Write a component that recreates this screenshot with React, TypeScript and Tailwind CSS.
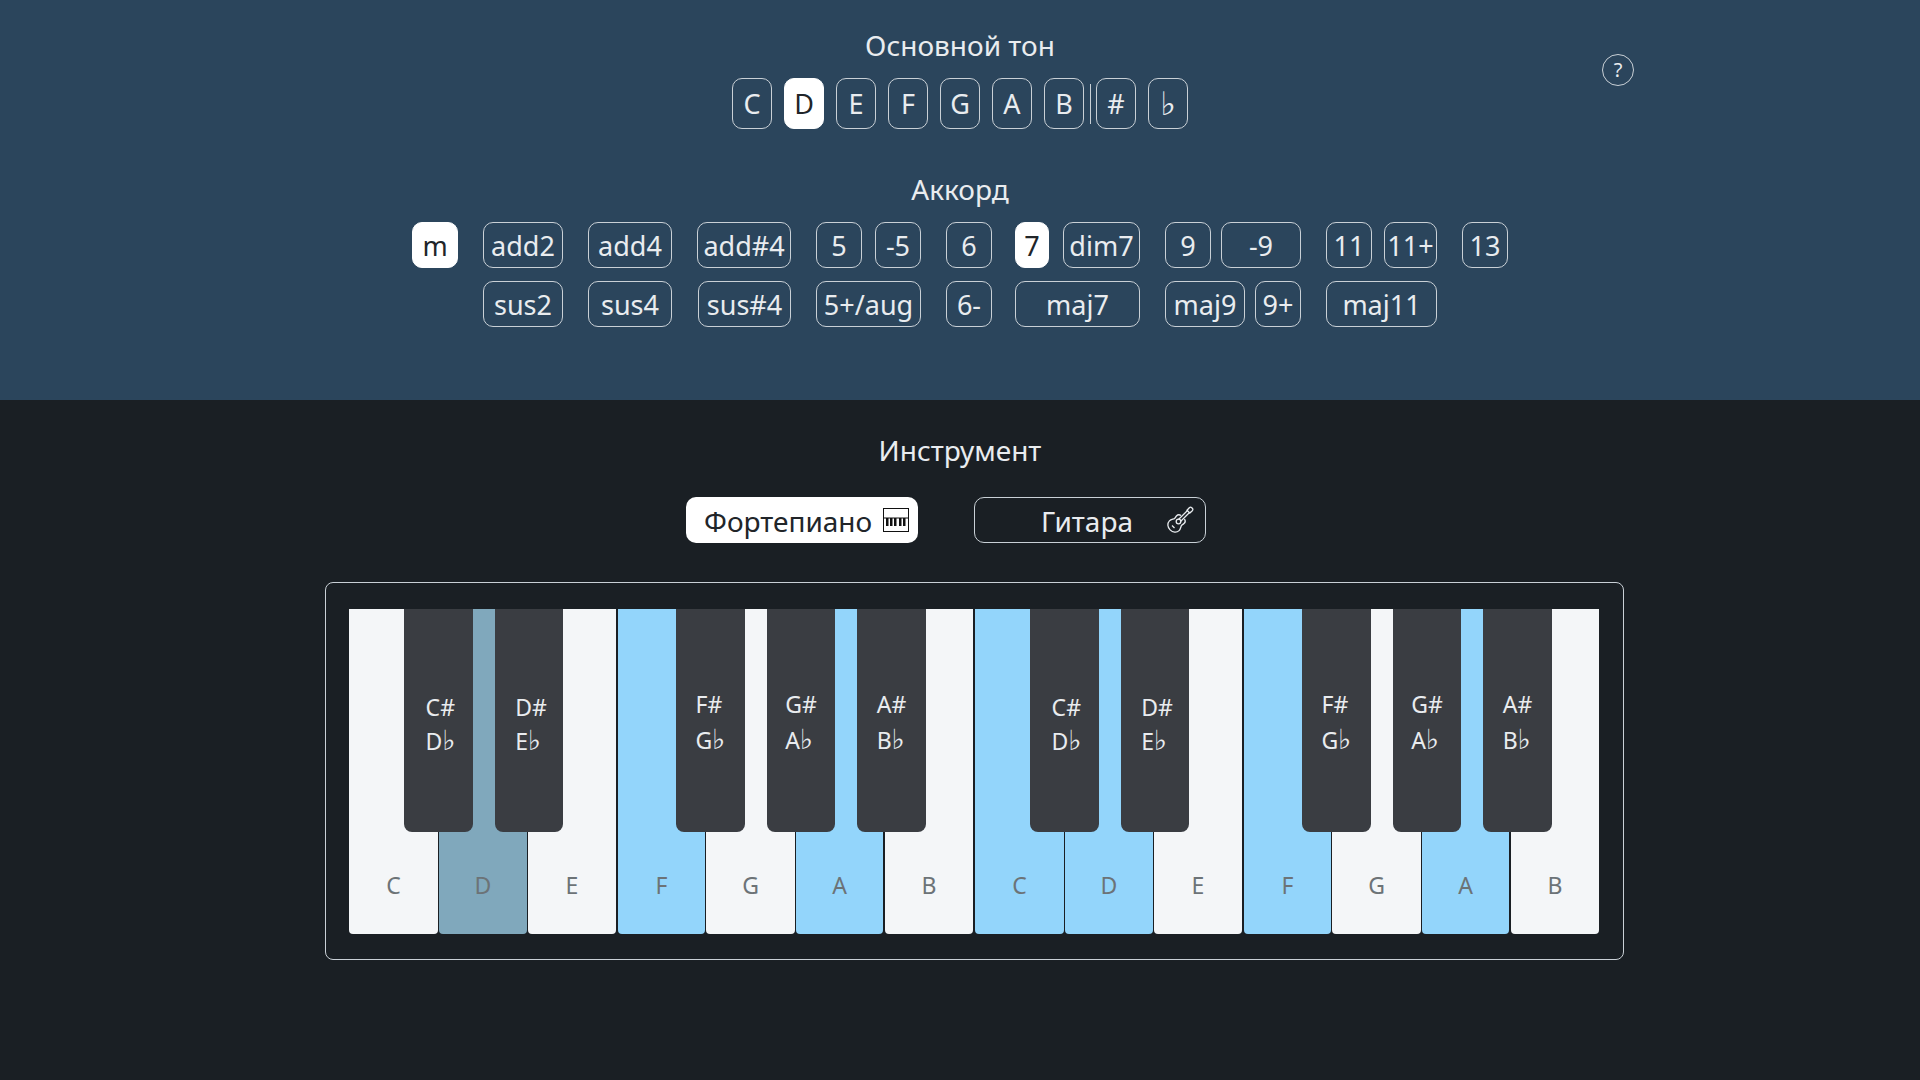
const notes = ["C", "D", "E", "F", "G", "A", "B"];

type Chord = { label: string; w: string; active?: boolean };

const chordColumns: { top: Chord[]; bottom: Chord[]; gap: string; shift?: string }[] = [
  { top: [{ label: "m", w: "w-[46px]", active: true }], bottom: [], gap: "gap-0" },
  { top: [{ label: "add2", w: "w-[80px]" }], bottom: [{ label: "sus2", w: "w-[80px]" }], gap: "gap-0" },
  { top: [{ label: "add4", w: "w-[84px]" }], bottom: [{ label: "sus4", w: "w-[84px]" }], gap: "gap-0" },
  { top: [{ label: "add#4", w: "w-[94px]" }], bottom: [{ label: "sus#4", w: "w-[93px] ml-px" }], gap: "gap-0" },
  {
    top: [
      { label: "5", w: "w-[46px]" },
      { label: "-5", w: "w-[46px]" },
    ],
    bottom: [{ label: "5+/aug", w: "w-[105px]" }],
    gap: "gap-[13px]",
  },
  { top: [{ label: "6", w: "w-[46px]" }], bottom: [{ label: "6-", w: "w-[46px]" }], gap: "gap-0" },
  {
    top: [
      { label: "7", w: "w-[34px]", active: true },
      { label: "dim7", w: "w-[77px]" },
    ],
    bottom: [{ label: "maj7", w: "w-[125px]" }],
    gap: "gap-[14px]",
    shift: "-ml-[2px]",
  },
  {
    top: [
      { label: "9", w: "w-[46px]" },
      { label: "-9", w: "w-[80px]" },
    ],
    bottom: [
      { label: "maj9", w: "w-[80px]" },
      { label: "9+", w: "w-[46px]" },
    ],
    gap: "gap-[10px]",
  },
  {
    top: [
      { label: "11", w: "w-[46px]" },
      { label: "11+", w: "w-[53px]" },
    ],
    bottom: [{ label: "maj11", w: "w-[111px]" }],
    gap: "gap-[12px]",
  },
  { top: [{ label: "13", w: "w-[46px]" }], bottom: [], gap: "gap-0" },
];

const whiteKeys = [
  { n: "C", w: "w-[89px]", bg: "bg-[#f4f6f8]" },
  { n: "D", w: "w-[88px] ml-px", bg: "bg-[#80a8bc]" },
  { n: "E", w: "w-[88px] ml-px", bg: "bg-[#f4f6f8]" },
  { n: "F", w: "w-[87px] ml-[2px]", bg: "bg-[#93d5fb]" },
  { n: "G", w: "w-[89px] ml-px", bg: "bg-[#f4f6f8]" },
  { n: "A", w: "w-[87px] ml-px", bg: "bg-[#93d5fb]" },
  { n: "B", w: "w-[88px] ml-[2px]", bg: "bg-[#f4f6f8]" },
  { n: "C", w: "w-[89px] ml-[2px]", bg: "bg-[#93d5fb]" },
  { n: "D", w: "w-[88px] ml-px", bg: "bg-[#93d5fb]" },
  { n: "E", w: "w-[88px] ml-px", bg: "bg-[#f4f6f8]" },
  { n: "F", w: "w-[87px] ml-[2px]", bg: "bg-[#93d5fb]" },
  { n: "G", w: "w-[89px] ml-px", bg: "bg-[#f4f6f8]" },
  { n: "A", w: "w-[87px] ml-px", bg: "bg-[#93d5fb]" },
  { n: "B", w: "w-[88px] ml-[2px]", bg: "bg-[#f4f6f8]" },
];

const blackKeys = [
  { a: "C#", b: "D", pos: "left-[55px] w-[69px]", text: "pt-[81px] pl-[4px] leading-[34px]" },
  { a: "D#", b: "E", pos: "left-[146px] w-[68px]", text: "pt-[81px] pl-[4px] leading-[34px]" },
  { a: "F#", b: "G", pos: "left-[327px] w-[69px]", text: "pt-[77px] leading-[36px]" },
  { a: "G#", b: "A", pos: "left-[418px] w-[68px]", text: "pt-[77px] leading-[36px]" },
  { a: "A#", b: "B", pos: "left-[508px] w-[69px]", text: "pt-[77px] leading-[36px]" },
  { a: "C#", b: "D", pos: "left-[681px] w-[69px]", text: "pt-[81px] pl-[4px] leading-[34px]" },
  { a: "D#", b: "E", pos: "left-[772px] w-[68px]", text: "pt-[81px] pl-[4px] leading-[34px]" },
  { a: "F#", b: "G", pos: "left-[953px] w-[69px]", text: "pt-[77px] leading-[36px]" },
  { a: "G#", b: "A", pos: "left-[1044px] w-[68px]", text: "pt-[77px] leading-[36px]" },
  { a: "A#", b: "B", pos: "left-[1134px] w-[69px]", text: "pt-[77px] leading-[36px]" },
];

// the flat sign comes out small from the fallback font, so it gets its own size
function Flat() {
  return <span className="font-['DejaVu_Sans'] text-[1.2em] leading-none font-medium">♭</span>;
}

function Tag({
  label,
  className,
  active,
}: {
  label: React.ReactNode;
  className: string;
  active?: boolean;
}) {
  return (
    <button
      className={`flex items-center justify-center rounded-[10px] border whitespace-nowrap pt-[2px] ${className} ${
        active
          ? "bg-white border-white text-[#212529]"
          : "border-[#c9d0d6] text-[#e9ecef]"
      }`}
    >
      {label}
    </button>
  );
}

function PianoIcon() {
  return (
    <svg width="26" height="24" viewBox="0 0 26 24" className="shrink-0">
      <rect x="0.5" y="0.5" width="25" height="23" fill="#fff" stroke="#111" />
      <line x1="1" y1="10" x2="25" y2="10" stroke="#111" strokeWidth="1" />
      <path
        d="M3 10h2.500v8H3zM7 10h2.500v8H7zM11 10h2.500v8H11zM16 10h2.500v8H16zM20 10h2.500v8H20z"
        fill="#111"
      />
    </svg>
  );
}

function GuitarIcon() {
  return (
    <svg width="28" height="28" viewBox="0 0 28 28" fill="none" stroke="#e9ecef" strokeWidth="1.3" className="shrink-0">
      <path d="M15 9.500c-1.500-1-3.500-.7-4.600.5-.8.900-1 2-2 2.600-1.300.700-3.500.800-5 2.300-2.300 2.400-2 6.300.7 9 2.700 2.700 6.600 3 9 .7 1.500-1.500 1.600-3.700 2.300-5 .6-1 1.700-1.200 2.600-2 1.200-1.100 1.500-3.100.5-4.600" />
      <path d="M12.500 13.500L21.500 4.500M14.500 15.500L23.500 6.500" />
      <path d="M21 4.200l2.300-2.500c.7-.6 1.800-.6 2.400 0l.6.600c.6.600.6 1.700 0 2.400L23.800 7z" />
      <circle cx="12.500" cy="15.500" r="2.300" />
      <path d="M6 19.500l2.500 2.500" />
    </svg>
  );
}

export default function App() {
  return (
    <div className="min-h-[1080px] bg-[#1a1f24] font-['Noto_Sans','Open_Sans','DejaVu_Sans',sans-serif] text-[#e9ecef]">
      <section className="relative h-[400px] bg-[#2b455c] flex flex-col items-center pt-[27px]">
        <h2 className="text-[28px] leading-[36px]">Основной тон</h2>

        <div className="flex items-center mt-[15px] text-[27px]">
          {notes.map((n, i) => (
            <Tag
              key={n}
              label={n}
              active={n === "D"}
              className={`w-[40px] h-[51px] ${i > 0 ? "ml-3" : ""}`}
            />
          ))}
          <span className="w-px h-[40px] bg-[#c9d0d6] ml-[6px] mr-[5px]" />
          <Tag label="#" className="w-[40px] h-[51px]" />
          <Tag label={<Flat />} className="w-[40px] h-[51px] ml-3" />
        </div>

        <h2 className="text-[28px] leading-[36px] mt-[42px]">Аккорд</h2>

        <div className="flex gap-[25px] mt-[15px] text-[27px]">
          {chordColumns.map((col, i) => (
            <div key={i} className={`flex flex-col gap-[13px] ${col.shift ?? ""}`}>
              <div className={`flex ${col.gap}`}>
                {col.top.map((c) => (
                  <Tag key={c.label} label={c.label} active={c.active} className={`h-[46px] ${c.w}`} />
                ))}
              </div>
              <div className={`flex ${col.gap}`}>
                {col.bottom.map((c) => (
                  <Tag key={c.label} label={c.label} className={`h-[46px] ${c.w}`} />
                ))}
              </div>
            </div>
          ))}
        </div>

        <button className="absolute left-[1602px] top-[54px] w-[32px] h-[32px] rounded-full border border-[#c9d0d6] text-[20px] flex items-center justify-center">
          ?
        </button>
      </section>

      <section className="flex flex-col items-center pt-[32px]">
        <h2 className="text-[28px] leading-[36px]">Инструмент</h2>

        <div className="flex gap-[56px] mt-[29px] mr-[28px] text-[28px]">
          <button className="w-[232px] h-[46px] rounded-[10px] bg-white text-[#212529] flex items-center justify-between pl-[18px] pr-[9px]">
            <span className="pt-[2px]">Фортепиано</span>
            <PianoIcon />
          </button>
          <button className="w-[232px] h-[46px] rounded-[10px] border border-[#c9d0d6] flex items-center justify-between pl-[66px] pr-[11px]">
            <span className="pt-[2px]">Гитара</span>
            <GuitarIcon />
          </button>
        </div>

        <div className="mt-[39px] ml-[29px] w-[1299px] h-[378px] rounded-[8px] border border-[#c9d0d6] pl-[23px] pt-[26px]">
          <div className="relative flex h-[325px] w-[1250px]">
            {whiteKeys.map((k, i) => (
              <div
                key={i}
                className={`${k.w} ${k.bg} rounded-b-[4px] flex items-end justify-center pb-[31px] text-[23px] leading-[36px] text-[#6c7377]`}
              >
                {k.n}
              </div>
            ))}
            {blackKeys.map((k, i) => (
              <div
                key={i}
                className={`absolute top-0 h-[223px] ${k.pos} bg-[#3a3d42] rounded-b-[8px] flex justify-center text-[23px] ${k.text} text-[#e9ecef]`}
              >
                <div>
                  <div>{k.a}</div>
                  <div>
                    {k.b}
                    <Flat />
                  </div>
                </div>
              </div>
            ))}
          </div>
        </div>
      </section>
    </div>
  );
}
